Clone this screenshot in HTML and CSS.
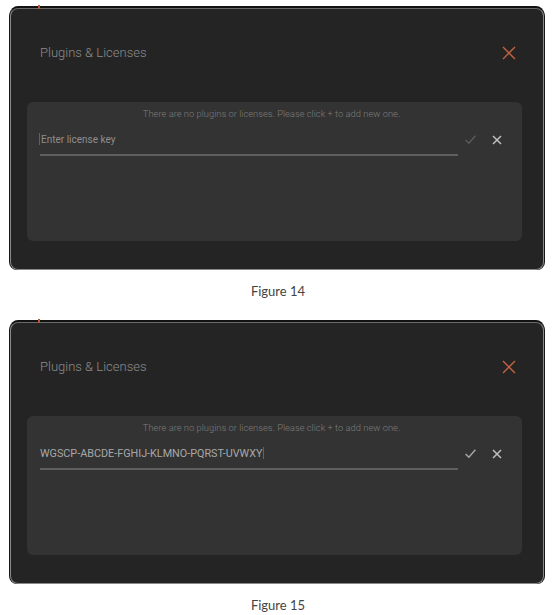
FILE: index.html
```html
<!DOCTYPE html>
<html>
<head>
<meta charset="utf-8">
<link rel="stylesheet" href="styles.css">
</head>
<body>
<div class="page">
  <figure class="fig">
    <div class="panel">
      <span class="mark"></span>
      <div class="header">
        <span class="title">Plugins &amp; Licenses</span>
        <svg class="close" viewBox="0 0 14 14"><path d="M1 1 L13 13 M13 1 L1 13"/></svg>
      </div>
      <div class="card">
        <div class="msg">There are no plugins or licenses. Please click + to add new one.</div>
        <div class="row">
          <div class="field"><span class="caret"></span><span class="placeholder">Enter license key</span></div>
          <svg class="ok dim" viewBox="0 0 12 12"><path d="M1.5 6.5 L4.5 9.5 L10.5 2.5"/></svg>
          <svg class="cancel" viewBox="0 0 12 12"><path d="M2 2 L10 10 M10 2 L2 10"/></svg>
        </div>
      </div>
    </div>
    <figcaption class="cap">Figure 14</figcaption>
  </figure>
  <figure class="fig">
    <div class="panel">
      <span class="mark"></span>
      <div class="header">
        <span class="title">Plugins &amp; Licenses</span>
        <svg class="close" viewBox="0 0 14 14"><path d="M1 1 L13 13 M13 1 L1 13"/></svg>
      </div>
      <div class="card">
        <div class="msg">There are no plugins or licenses. Please click + to add new one.</div>
        <div class="row">
          <div class="field"><span class="value">WGSCP-ABCDE-FGHIJ-KLMNO-PQRST-UVWXY</span><span class="caret"></span></div>
          <svg class="ok" viewBox="0 0 12 12"><path d="M1.5 6.5 L4.5 9.5 L10.5 2.5"/></svg>
          <svg class="cancel" viewBox="0 0 12 12"><path d="M2 2 L10 10 M10 2 L2 10"/></svg>
        </div>
      </div>
    </div>
    <figcaption class="cap">Figure 15</figcaption>
  </figure>
</div>
</body>
</html>
```

FILE: styles.css
```css
html, body {
  margin: 0;
  padding: 0;
  background: #ffffff;
}
.page {
  padding: 8px 0 0 10px;
  width: 534px;
  display: flex;
  flex-direction: column;
}
.fig {
  margin: 0;
  display: flex;
  flex-direction: column;
}
.fig + .fig {
  margin-top: 23px;
}
.panel {
  position: relative;
  box-sizing: border-box;
  height: 262px;
  background: #242424;
  border: 1px solid #8a8a8a;
  border-top-color: #6a6a6a;
  border-radius: 8px;
  box-shadow: 0 -2px 0 0 #121212, -1px 0 0 0 #151515, 1px 0 0 0 #151515;
  padding: 0 21px 28px 16px;
  display: flex;
  flex-direction: column;
}
.mark {
  position: absolute;
  left: 27px;
  top: -4px;
  width: 2px;
  height: 4px;
  background: #b35a3a;
}
.header {
  height: 93px;
  box-sizing: border-box;
  padding: 36px 6px 0 13px;
  display: flex;
  justify-content: space-between;
  align-items: flex-start;
}
.title {
  font-family: Roboto, "Liberation Sans", sans-serif;
  font-weight: 300;
  font-size: 13px;
  line-height: 16px;
  color: #8c8c8c;
}
.close {
  width: 14px;
  height: 14px;
  margin-top: 1px;
  fill: none;
  stroke: #c4633f;
  stroke-width: 1.4;
}
.card {
  flex: 1;
  background: #333333;
  border-radius: 6px;
  padding: 6px 19px 0 13px;
}
.msg {
  font-family: Roboto, "Liberation Sans", sans-serif;
  font-weight: 300;
  font-size: 9.4px;
  line-height: 12px;
  color: #7c7c7c;
  text-align: center;
}
.row {
  margin-top: 12px;
  display: flex;
  align-items: flex-start;
}
.field {
  flex: 0 0 418px;
  box-sizing: border-box;
  height: 24px;
  border-bottom: 2px solid #5e5e5e;
  display: flex;
  align-items: center;
  padding-bottom: 8px;
  font-family: Roboto, "Liberation Sans", sans-serif;
  font-size: 10px;
}
.placeholder {
  color: #8e8e8e;
}
.value {
  color: #a8a8a8;
  font-size: 10.8px;
}
.caret {
  width: 1px;
  height: 12px;
  background: #7a4f86;
  margin: 0 1px 0 -1px;
}
.value + .caret {
  margin: 0 0 0 1px;
}
.ok {
  flex: none;
  width: 13px;
  height: 13px;
  margin: 1px 0 0 6px;
  fill: none;
  stroke: #a8a8a8;
  stroke-width: 1.3;
}
.ok.dim {
  stroke: #5a5a5a;
}
.cancel {
  flex: none;
  width: 12px;
  height: 12px;
  margin: 2px 0 0 14px;
  fill: none;
  stroke: #c0c0c0;
  stroke-width: 1.5;
}
.cap {
  margin-top: 13px;
  text-align: center;
  font-family: Lato, "Open Sans", sans-serif;
  font-weight: 400;
  font-size: 13px;
  line-height: 16px;
  color: #444444;
  padding-left: 2px;
}
```
